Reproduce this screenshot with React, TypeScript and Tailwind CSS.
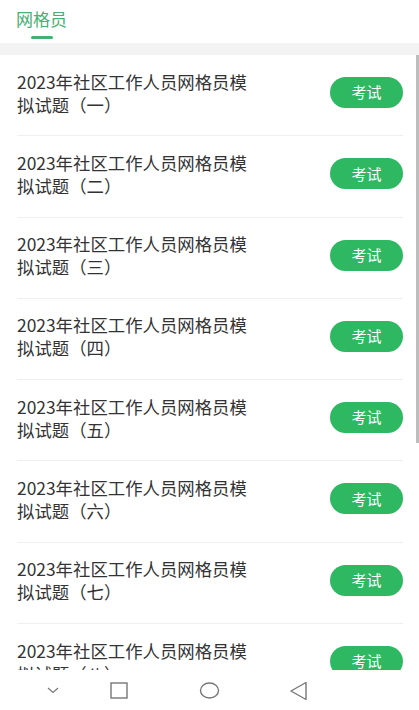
import React from "react";

const items = ["一", "二", "三", "四", "五", "六", "七", "八"];

export default function App() {
  return (
    <div
      className="w-[419px] h-[710px] flex flex-col overflow-hidden bg-white"
      style={{ fontFamily: '"Noto Sans CJK SC", "Noto Sans", sans-serif' }}
    >
      <div className="h-[43px] shrink-0 bg-white relative">
        <div className="pl-[16px] pt-[8px] text-[17px] leading-[22px] text-[#45b072]">网格员</div>
        <div className="absolute left-[31px] top-[36px] w-[22px] h-[3px] rounded-full bg-[#45b072]" />
      </div>
      <div className="h-[12px] shrink-0 bg-[#f3f3f3]" />
      <div className="flex-1 relative overflow-hidden">
        {items.map((n) => (
          <div key={n} className="h-[81.3px] pl-[17px] pr-[16px]">
            <div className="h-full flex items-start border-b border-[#efefef]">
              <div className="flex-1 pt-[14.5px] text-[17.4px] leading-[23px] text-[#333333]">
                <div>2023年社区工作人员网格员模</div>
                <div>拟试题（{n}）</div>
              </div>
              <div className="mt-[22px] w-[73px] h-[31px] rounded-full bg-[#2fb862] text-white text-[15px] flex items-center justify-center">
                考试
              </div>
            </div>
          </div>
        ))}
        <div className="absolute right-0 top-0 w-[3px] h-[388px] bg-[#bdbdbd]" />
      </div>
      <div className="h-[40px] shrink-0 bg-white relative">
        <svg className="absolute left-[47px] top-[17px]" width="12" height="7" viewBox="0 0 12 7" fill="none" stroke="#777" strokeWidth="1.2">
          <path d="M1 1 L6 5.5 L11 1" />
        </svg>
        <svg className="absolute left-[110px] top-[12px]" width="18" height="17" viewBox="0 0 18 17" fill="none" stroke="#777" strokeWidth="1.4">
          <rect x="1" y="1" width="16" height="15" />
        </svg>
        <svg className="absolute left-[199px] top-[12px]" width="21" height="17" viewBox="0 0 21 17" fill="none" stroke="#777" strokeWidth="1.4">
          <ellipse cx="10.5" cy="8.5" rx="9" ry="7.5" />
        </svg>
        <svg className="absolute left-[289px] top-[11px]" width="19" height="20" viewBox="0 0 19 20" fill="none" stroke="#777" strokeWidth="1.4" strokeLinejoin="round">
          <path d="M17 1.5 L2 10 L17 18.5 Z" />
        </svg>
      </div>
    </div>
  );
}
